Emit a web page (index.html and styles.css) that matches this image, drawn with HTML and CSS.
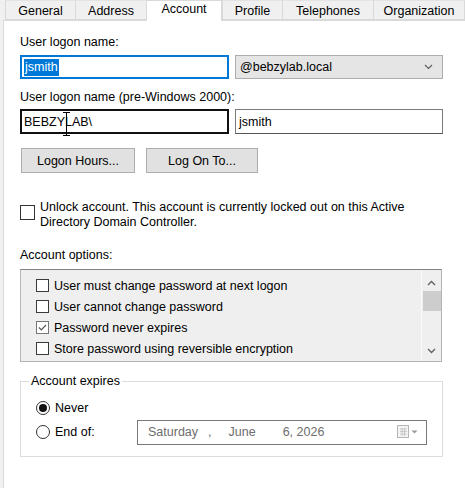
FILE: index.html
```html
<!DOCTYPE html>
<html lang="en">
<head>
<meta charset="UTF-8" />
<title>Account properties</title>
<link rel="stylesheet" href="styles.css">
</head>
<body>
<nav class="tabs">
  <div class="tab tab-general">General</div>
  <div class="tab tab-address">Address</div>
  <div class="tab tab-account active">Account</div>
  <div class="tab tab-profile">Profile</div>
  <div class="tab tab-phones">Telephones</div>
  <div class="tab tab-org">Organization</div>
</nav>

<main class="panel">
  <div class="label">User logon name:</div>
  <div class="field-row">
    <div class="textbox focused"><span class="selected">jsmith</span></div>
    <div class="combo">
      <span>@bebzylab.local</span>
      <svg class="chevron" width="9" height="6" viewBox="0 0 9 6"><path d="M1 1 L4.5 4.5 L8 1" fill="none" stroke="#606060" stroke-width="1.2"/></svg>
    </div>
  </div>

  <div class="label label-second">User logon name (pre-Windows 2000):</div>
  <div class="field-row">
    <div class="textbox dark">
      <span>BEBZYLAB\</span>
      <svg class="ibeam" width="9" height="24" viewBox="0 0 9 24"><path d="M1 0.5 H8 M4.5 0.5 V23.5 M1 23.5 H8" fill="none" stroke="#000" stroke-width="1"/></svg>
    </div>
    <div class="textbox plain"><span>jsmith</span></div>
  </div>

  <div class="buttons">
    <button class="btn btn-hours">Logon Hours...</button>
    <button class="btn btn-logon">Log On To...</button>
  </div>

  <div class="unlock">
    <span class="check"></span>
    <span class="unlock-text">Unlock account. This account is currently locked out on this Active<br>Directory Domain Controller.</span>
  </div>

  <div class="label label-options">Account options:</div>
  <div class="listbox">
    <div class="list-items">
      <div class="item"><span class="check"></span>User must change password at next logon</div>
      <div class="item"><span class="check"></span>User cannot change password</div>
      <div class="item"><span class="check checked"><svg width="11" height="11" viewBox="0 0 11 11"><path d="M2 5.5 L4.3 7.8 L9 3" fill="none" stroke="#555" stroke-width="1.2"/></svg></span>Password never expires</div>
      <div class="item"><span class="check"></span>Store password using reversible encryption</div>
    </div>
    <div class="scrollbar">
      <svg class="arrow" width="9" height="6" viewBox="0 0 9 6"><path d="M1 5 L4.5 1.5 L8 5" fill="none" stroke="#606060" stroke-width="1.3"/></svg>
      <div class="thumb"></div>
      <svg class="arrow arrow-down" width="9" height="6" viewBox="0 0 9 6"><path d="M1 1 L4.5 4.5 L8 1" fill="none" stroke="#606060" stroke-width="1.3"/></svg>
    </div>
  </div>

  <fieldset class="expires">
    <legend>Account expires</legend>
    <div class="radio-row">
      <span class="radio on"></span>Never
    </div>
    <div class="radio-row">
      <span class="radio-label"><span class="radio"></span>End of:</span>
      <div class="datepicker">
        <span class="d-day">Saturday</span>
        <span class="d-comma">,</span>
        <span class="d-month">June</span>
        <span class="d-date">6, 2026</span>
        <svg class="cal" width="22" height="14" viewBox="0 0 22 14">
          <rect x="0.5" y="0.5" width="11" height="12" fill="#f4f4f4" stroke="#b5b5b5"/>
          <path d="M3 4 H10 M3 6.5 H10 M3 9 H10 M5 3 V11 M7.5 3 V11" stroke="#c8c8c8" stroke-width="1"/>
          <path d="M14.5 5.5 H20.5 L17.5 8.5 Z" fill="#9a9a9a"/>
        </svg>
      </div>
    </div>
  </fieldset>
</main>
</body>
</html>
```

FILE: styles.css
```css
* {
  box-sizing: border-box;
}
body {
  margin: 0;
  background: #f0f0f0;
  font-family: "Liberation Sans", Arial, sans-serif;
  font-size: 12.5px;
  color: #000;
  height: 488px;
  overflow: hidden;
  display: flex;
  flex-direction: column;
}
.tabs {
  display: flex;
  height: 21px;
  padding-left: 5px;
  position: relative;
  z-index: 1;
}
.tab {
  height: 20px;
  line-height: 20px;
  text-align: center;
  background: #f0f0f0;
  border-left: 1px solid #d9d9d9;
  border-top: 1px solid #e3e3e3;
  border-bottom: 1px solid #d9d9d9;
}
.tab-general { width: 70px; }
.tab-address { width: 71px; }
.tab-account { width: 76px; }
.tab-profile { width: 60px; }
.tab-phones { width: 91px; }
.tab-org { width: 92px; border-right: 1px solid #d9d9d9; }
.tab.active {
  background: #fff;
  height: 21px;
  line-height: 16px;
  border: 1px solid #d9d9d9;
  border-bottom: none;
}
.panel {
  flex-grow: 1;
  margin-left: 3px;
  margin-top: -1px;
  background: #fff;
  border-left: 1px solid #d9d9d9;
  border-top: 1px solid #d9d9d9;
  padding: 14px 21px 0 16px;
}
.label {
  line-height: 14px;
  height: 14px;
}
.field-row {
  display: flex;
  gap: 6px;
  margin-top: 6px;
  height: 24px;
}
.label-second {
  margin-top: 11px;
}
.field-row + .label-second + .field-row {
  margin-top: 5px;
  height: 25px;
}
.textbox {
  position: relative;
  width: 209px;
  height: 100%;
  border: 1px solid #7a7a7a;
  padding: 0 3px;
  display: flex;
  align-items: center;
}
.textbox.focused {
  border: 2px solid #0078d7;
  padding: 0 2px;
}
.textbox.dark {
  border: 2px solid #111;
  padding: 0 2px;
}
.textbox.plain {
  width: 208px;
  border-bottom-color: #555;
}
.selected {
  background: #0078d7;
  color: #fff;
  padding: 1px 1px 2px;
  line-height: 14px;
}
.ibeam {
  position: absolute;
  left: 40px;
  top: 1px;
}
.combo {
  width: 208px;
  background: #e5e5e5;
  border: 1px solid #adadad;
  display: flex;
  align-items: center;
  justify-content: space-between;
  padding: 0 9px 0 4px;
}
.buttons {
  display: flex;
  gap: 11px;
  margin-top: 14px;
  padding-left: 1px;
}
.btn {
  height: 25px;
  background: #e1e1e1;
  border: 1px solid #adadad;
  font: inherit;
  color: #000;
  padding: 0;
}
.btn-hours { width: 114px; }
.btn-logon { width: 112px; }
.check {
  width: 13px;
  height: 13px;
  border: 1px solid #333;
  background: #fff;
  flex-shrink: 0;
  display: inline-flex;
}
.unlock {
  display: flex;
  align-items: flex-start;
  gap: 6px;
  margin-top: 27px;
  line-height: 15px;
}
.unlock .check {
  width: 15px;
  height: 15px;
  margin-top: 5px;
}
.unlock-text {
  margin-left: -1px;
}
.label-options {
  margin-top: 18px;
}
.listbox {
  margin-top: 7px;
  width: 422px;
  height: 93px;
  background: #efefef;
  border: 1px solid #b4b4b4;
  border-top-color: #828282;
  display: flex;
}
.list-items {
  flex-grow: 1;
  padding: 5px 0 0 15px;
  border-right: 1px solid #fafafa;
}
.item {
  height: 21px;
  display: flex;
  align-items: center;
  gap: 5px;
}
.item .check {
  border-color: #3a3a3a;
}
.check.checked {
  border-color: #777;
  align-items: center;
  justify-content: center;
}
.scrollbar {
  width: 19px;
  display: flex;
  flex-direction: column;
  align-items: center;
  padding-top: 10px;
}
.thumb {
  width: 18px;
  height: 20px;
  background: #cdcdcd;
  margin-top: 5px;
}
.arrow-down {
  margin-top: auto;
  margin-bottom: 7px;
}
.expires {
  margin: 12px 0 0;
  width: 423px;
  height: 83px;
  border: 1px solid #dcdcdc;
  padding: 8px 0 0 15px;
}
.expires legend {
  padding: 0 2px;
  margin-left: -7px;
  line-height: 14px;
}
.radio-row {
  height: 24px;
  display: flex;
  align-items: center;
}
.radio-label {
  width: 101px;
  display: flex;
  align-items: center;
}
.radio {
  width: 14px;
  height: 14px;
  border: 1px solid #333;
  border-radius: 50%;
  background: #fff;
  margin-right: 5px;
  display: inline-flex;
  align-items: center;
  justify-content: center;
}
.radio.on::after {
  content: "";
  width: 8px;
  height: 8px;
  border-radius: 50%;
  background: #111;
}
.datepicker {
  width: 290px;
  height: 25px;
  border: 1px solid #7a7a7a;
  display: flex;
  align-items: center;
  color: #6d6d6d;
  padding-left: 10px;
}
.d-comma { margin-left: 10px; }
.d-month { margin-left: 17px; }
.d-date { margin-left: 27px; }
.cal {
  margin-left: auto;
  margin-right: 7px;
}
```
